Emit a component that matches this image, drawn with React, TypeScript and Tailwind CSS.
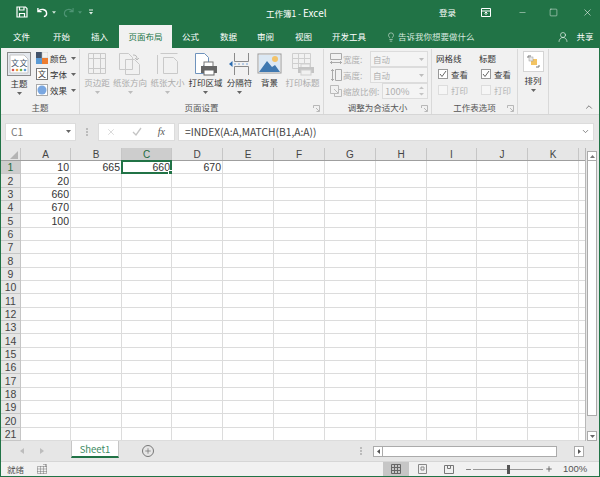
import { ReactNode } from "react";
import { ChevronDown, ChevronUp, Lightbulb, Minus, Plus, Square, UserRound, X } from "lucide-react";

const FONT = "font-['Microsoft_YaHei','Noto_Sans_CJK_SC','Noto_Sans',sans-serif]";
const COLS = ["A", "B", "C", "D", "E", "F", "G", "H", "I", "J", "K"];
const ROWS = Array.from({ length: 21 }, (_, i) => i + 1);
const COL_W = ["w-[50px]", "w-[51px]", "w-[50px]", "w-[51px]", "w-[51px]", "w-[51px]", "w-[51px]", "w-[51px]", "w-[50px]", "w-[51px]", "w-[51px]"];

const CELLS: Record<string, string> = {
  "1-A": "10", "2-A": "20", "3-A": "660", "4-A": "670", "5-A": "100",
  "1-B": "665", "1-C": "660", "1-D": "670",
};

function Caret({ light }: { light?: boolean }) {
  return (
    <svg width="5" height="3" viewBox="0 0 5 3" className="shrink-0">
      <path d="M0 0h5L2.500 3z" fill={light ? "#bdbdbd" : "#666"} />
    </svg>
  );
}

function Launcher() {
  return (
    <svg width="7" height="7" viewBox="0 0 7 7" className="shrink-0">
      <path d="M.5 3V.5H6.5V6.5H3.5M3 3l3 3" fill="none" stroke="#aaa" strokeWidth="0.8" />
    </svg>
  );
}

function Margins() {
  return (
    <svg width="24" height="24" viewBox="0 0 24 24" fill="none" stroke="#c9c9c9">
      <path d="M3.500 1.500h17v20h-17zM8.500 1.500v20M15.500 1.500v20M3.500 6.500h17M3.500 16.500h17" />
    </svg>
  );
}
function Orientation() {
  return (
    <svg width="24" height="24" viewBox="0 0 24 24" fill="none" stroke="#c9c9c9">
      <path d="M1.500 1.500h9l4 4v12h-13zM7.500 7.500h9l5 5v10h-14z" fill="#f1f1f1" />
      <path d="M15 3c3 0 4 1 4 4M17 6l2 2 2-2" stroke="#bbb" />
    </svg>
  );
}
function PaperSize() {
  return (
    <svg width="24" height="24" viewBox="0 0 24 24" fill="none" stroke="#c9c9c9">
      <path d="M1.500 3v19M4.500 1.500h17M7.500 5.500h10l4 4v12h-14z" />
    </svg>
  );
}
function PrintArea() {
  return (
    <svg width="24" height="24" viewBox="0 0 24 24" fill="none">
      <path d="M1.500 1.500h9l4 4v8h-5v8h-8z" fill="#fff" stroke="#6f93bd" />
      <rect x="10" y="10" width="9" height="5" fill="#fff" stroke="#777" />
      <rect x="7" y="14" width="16" height="7" fill="#666" />
      <rect x="10" y="18" width="10" height="5" fill="#fff" stroke="#666" />
    </svg>
  );
}
function Breaks() {
  return (
    <svg width="24" height="24" viewBox="0 0 24 24" fill="none">
      <path d="M6.500 1v8.500h14V1M6.500 23v-8.500h14V23" stroke="#8a8a8a" />
      <path d="M1 12l3.500-3v6z" fill="#2b6cb0" />
      <path d="M6 12h16" stroke="#7da7d8" strokeDasharray="2 2" />
    </svg>
  );
}
function Background() {
  return (
    <svg width="25" height="24" viewBox="0 0 25 24">
      <rect x="1" y="2" width="23" height="19" fill="#fff" stroke="#999" />
      <rect x="2" y="3" width="21" height="17" fill="#dbe8f4" />
      <circle cx="18" cy="7" r="3" fill="#f2c36b" />
      <path d="M2 20l8-11 5 6 3-2 5 7z" fill="#3f78b0" />
    </svg>
  );
}
function PrintTitles() {
  return (
    <svg width="24" height="24" viewBox="0 0 24 24" fill="none" stroke="#cfcfcf">
      <path d="M1.500 1.500h18v15h-18zM1.500 6.500h18M1.500 11.500h18M7.500 1.500v15M13.500 1.500v15" />
      <rect x="10" y="12" width="9" height="4" fill="#f1f1f1" />
      <rect x="7" y="15" width="16" height="6" fill="#c4c4c4" stroke="none" />
      <rect x="10" y="18" width="10" height="5" fill="#f1f1f1" />
    </svg>
  );
}

function PageButton({ w, label, icon, off, caret = true }: { w: string; label: string; icon: ReactNode; off?: boolean; caret?: boolean }) {
  return (
    <div className={`flex flex-col items-center ${w}`}>
      <div className="h-[24px] flex items-center justify-center">{icon}</div>
      <div className={`h-[12px] leading-[12px] text-[8.5px] whitespace-nowrap ${off ? "text-[#ababab]" : "text-[#333]"}`}>{label}</div>
      {caret && <div className="mt-[3px]"><Caret light={off} /></div>}
    </div>
  );
}

function ThemeRow({ icon, label }: { icon: ReactNode; label: string }) {
  return (
    <div className="h-[16px] flex items-center">
      <div className="w-[12px] h-[12px] mr-[2px] flex items-center justify-center">{icon}</div>
      <span className="text-[8.5px] text-[#333] w-[21px] whitespace-nowrap">{label}</span>
      <Caret />
    </div>
  );
}

function Check({ on, label }: { on?: boolean; label: string }) {
  return (
    <div className="h-[16px] flex items-center">
      <div className={`w-[10px] h-[10px] border flex items-center justify-center ${on ? "border-[#999] bg-white" : "border-[#ddd] bg-[#f6f6f6]"}`}>
        {on && (
          <svg width="8" height="8" viewBox="0 0 8 8">
            <path d="M1 4l2 2.500L7 1" fill="none" stroke="#666" />
          </svg>
        )}
      </div>
      <span className={`ml-[3px] text-[8.5px] ${on ? "text-[#444]" : "text-[#b5b5b5]"}`}>{label}</span>
    </div>
  );
}

function SizeRow({ icon, label, value, spin }: { icon: ReactNode; label: string; value: string; spin?: boolean }) {
  return (
    <div className="h-[16px] flex items-center text-[8.5px] text-[#b0b0b0]">
      <div className="w-[13px] flex justify-center mr-[1px]">{icon}</div>
      <span className={`whitespace-nowrap ${spin ? "w-[39px]" : "w-[27px]"}`}>{label}</span>
      <div className="flex-1 h-[16px] border border-[#dcdcdc] bg-[#f4f4f4] flex items-center justify-between pl-[2px] pr-[3px]">
        <span className={spin ? "text-[9.5px]" : ""}>{value}</span>
        {spin ? (
          <svg width="5" height="10" viewBox="0 0 5 10"><path d="M0 3l2.500-2.500L5 3zM0 7l2.500 2.500L5 7z" fill="#c4c4c4" /></svg>
        ) : (
          <Caret light />
        )}
      </div>
    </div>
  );
}

function Group({ w, label, launcher, children }: { w: string; label?: string; launcher?: boolean; children: ReactNode }) {
  return (
    <div className={`${w} h-[65px] border-r border-[#d9d9d9] flex flex-col shrink-0`}>
      <div className="h-[51px]">{children}</div>
      <div className="relative flex-1 flex items-center justify-center text-[8.5px] text-[#555]">
        {label}
        {launcher && <div className="absolute right-[3px] bottom-[2px]"><Launcher /></div>}
      </div>
    </div>
  );
}

function Grid() {
  return (
    <div className="h-[293px] shrink-0 flex font-['Liberation_Sans',sans-serif]">
      <div className="flex-1 min-w-0 flex flex-col overflow-hidden">
        {/* column headers */}
        <div className="h-[13px] flex shrink-0 bg-[#e6e6e6] border-b border-[#9f9f9f]">
          <div className="w-[20px] shrink-0 border-r border-[#c6c6c6] flex items-end justify-end pr-[2px] pb-[1px]">
            <svg width="8" height="8" viewBox="0 0 8 8"><path d="M8 0v8H0z" fill="#b4b4b4" /></svg>
          </div>
          {COLS.map((c, i) => (
            <div key={c} className={`${COL_W[i]} shrink-0 border-r border-[#c6c6c6] flex items-center justify-center text-[10px] leading-[11px] ${c === "C" ? "bg-[#cdcdcd] text-[#1e6b40]" : "text-[#444]"}`}>
              {c}
            </div>
          ))}
        </div>
        {/* rows */}
        <div className="grid grid-rows-[repeat(21,13.33px)] bg-white">
          {ROWS.map((r) => (
            <div key={r} className="flex min-h-0">
              <div className={`w-[20px] shrink-0 border-r border-b border-[#c6c6c6] flex items-end justify-center text-[10.5px] leading-[11px] ${r === 1 ? "bg-[#cdcdcd] text-[#1e6b40]" : "bg-[#e6e6e6] text-[#444]"}`}>
                {r}
              </div>
              {COLS.map((c, i) => {
                const sel = r === 1 && c === "C";
                return (
                  <div key={c} className={`${COL_W[i]} shrink-0 relative border-r border-b border-[#dcdcdc] flex items-end justify-end pr-[1px] text-[10.5px] leading-[11px] text-[#333]`}>
                    {CELLS[`${r}-${c}`]}
                    {sel && (
                      <div className="absolute left-[-1px] top-[-1px] right-[-1px] bottom-[-1px] border-2 border-[#217346]">
                        <div className="absolute right-[-3px] bottom-[-3px] w-[5px] h-[5px] bg-[#217346] border border-white" />
                      </div>
                    )}
                  </div>
                );
              })}
              <div className="flex-1 border-b border-[#dcdcdc]" />
            </div>
          ))}
        </div>
      </div>
      {/* vertical scrollbar */}
      <div className="w-[14px] shrink-0 bg-[#e6e6e6] flex flex-col pt-[3px] pl-[1px] border-l border-[#b8b8b8]">
        <div className="w-[10px] h-[10px] bg-white border border-[#ababab] flex items-center justify-center">
          <svg width="5" height="3" viewBox="0 0 5 3"><path d="M0 3h5L2.500 0z" fill="#777" /></svg>
        </div>
        <div className="w-[10px] h-[255px] bg-white border border-[#ababab] border-t-0" />
        <div className="flex-1" />
        <div className="w-[10px] h-[10px] bg-white border border-[#ababab] flex items-center justify-center">
          <Caret />
        </div>
      </div>
    </div>
  );
}

export default function App() {
  return (
    <div className={`w-[600px] h-[477px] flex flex-col overflow-hidden bg-[#e6e6e6] border-x border-b border-[#217346] ${FONT}`}>
      {/* title bar */}
      <div className="h-[24px] shrink-0 bg-[#217346] flex items-center text-white text-[8.5px]">
        <svg width="12" height="12" viewBox="0 0 12 12" fill="none" stroke="#fff" className="ml-[15px]">
          <path d="M1 1h8.500l1.500 1.500V11H1zM3.500 1v3h4.500V1M3.500 11V7.500h5V11" strokeWidth="1.200" />
        </svg>
        <svg width="11" height="11" viewBox="0 0 12 12" fill="none" stroke="#fff" className="ml-[9px]" strokeWidth="1.500">
          <path d="M1 1v4h4M1.500 4.500C4 1.500 10 2 10.500 6.500c.2 2-1 3.500-3 4" />
        </svg>
        <div className="ml-[4px]"><svg width="4" height="3" viewBox="0 0 5 3"><path d="M0 0h5L2.500 3z" fill="#cfe3d8" /></svg></div>
        <svg width="11" height="11" viewBox="0 0 12 12" fill="none" stroke="#4e9474" className="ml-[7px]" strokeWidth="1.200">
          <path d="M11 1v4H7M10.500 4.500C8 1.500 2 2 1.500 6.500c-.2 2 1 3.500 3 4" />
        </svg>
        <div className="ml-[4px]"><svg width="4" height="3" viewBox="0 0 5 3"><path d="M0 0h5L2.500 3z" fill="#4e9474" /></svg></div>
        <svg width="4" height="6" viewBox="0 0 5 6" className="ml-[7px]"><path d="M0 0h5v1H0zM0 3h5L2.500 6z" fill="#dfeee6" /></svg>
        <div className="ml-[173px] w-[66px] whitespace-nowrap">工作簿1 - <span className="text-[10px]">Excel</span></div>
        <span className="ml-[107px] w-[17px] whitespace-nowrap">登录</span>
        <svg width="10" height="9" viewBox="0 0 10 9" fill="none" stroke="#fff" className="ml-[25px]">
          <path d="M.5.500h9v8h-9zM.5 3h9M5 5v2M3.500 5.500L5 4l1.500 1.500" />
        </svg>
        <Minus size={9} strokeWidth={1.2} className="ml-[27px]" />
        <Square size={9} strokeWidth={1.2} className="ml-[22px]" />
        <X size={11} strokeWidth={1.2} className="ml-[24px]" />
      </div>

      {/* tabs */}
      <div className="h-[24px] shrink-0 bg-[#217346] flex items-end text-white text-[8.5px]">
        {[
          ["文件", "w-[52px] pl-[12px]"],
          ["开始", "w-[38px]"],
          ["插入", "w-[28px]"],
        ].map(([t, w]) => (
          <div key={t} className={`h-[23px] flex items-center ${w}`}>{t}</div>
        ))}
        <div className="w-[53px] h-[23px] bg-[#f1f1f1] text-[#217346] flex items-center justify-center whitespace-nowrap">页面布局</div>
        {[
          ["公式", "w-[38px] ml-[10px]"],
          ["数据", "w-[37px]"],
          ["审阅", "w-[38px]"],
          ["视图", "w-[37px]"],
          ["开发工具", "w-[54px]"],
        ].map(([t, w]) => (
          <div key={t} className={`h-[23px] flex items-center whitespace-nowrap ${w}`}>{t}</div>
        ))}
        <div className="h-[23px] flex items-center">
          <Lightbulb size={10} strokeWidth={1.2} />
          <span className="ml-[2px] whitespace-nowrap text-[#d7e8df]">告诉我你想要做什么</span>
        </div>
        <div className="h-[23px] ml-[82px] flex items-center">
          <UserRound size={12} strokeWidth={1.2} />
          <span className="ml-[8px] whitespace-nowrap">共享</span>
        </div>
      </div>

      {/* ribbon */}
      <div className="h-[67px] shrink-0 bg-[#f1f1f1] border-b border-[#d6d6d6] flex pt-[1px] relative">
        <Group w="w-[79px]" label="主题">
          <div className="flex pl-[6px] pt-[1px]">
            <div className="w-[24px] mt-[2px] flex flex-col items-center">
              <div className="w-[24px] h-[24px] border border-[#8a8a8a] bg-[#e4e8ee] flex items-center justify-center">
                <svg width="20" height="20" viewBox="0 0 20 20">
                  <path d="M1 1h14l4 4v14H1z" fill="#fff" stroke="#c5c5c5" />
                  <text x="2" y="12" fontSize="8" fill="#44546a">文</text>
                  <text x="10.500" y="12" fontSize="8" fill="#44546a">文</text>
                  <circle cx="4" cy="16" r="1.300" fill="#d9534f" />
                  <circle cx="8" cy="16" r="1.300" fill="#e8a33d" />
                  <circle cx="12" cy="16" r="1.300" fill="#70ad47" />
                  <circle cx="16" cy="16" r="1.300" fill="#5b9bd5" />
                </svg>
              </div>
              <div className="h-[12px] leading-[12px] text-[8.5px] text-[#333] mt-[1px]">主题</div>
              <div className="mt-[3px]"><Caret /></div>
            </div>
            <div className="ml-[5px] flex flex-col">
              <ThemeRow
                label="颜色"
                icon={<svg width="12" height="12" viewBox="0 0 12 12"><rect width="6" height="6" fill="#44546a" /><rect x="6" width="6" height="6" fill="#f1f1f1" stroke="#bbb" strokeWidth="0.5" /><rect y="6" width="6" height="6" fill="#5b9bd5" /><rect x="6" y="6" width="6" height="6" fill="#ed7d31" /></svg>}
              />
              <ThemeRow
                label="字体"
                icon={<div className="w-[12px] h-[12px] border border-[#777] bg-white text-[8px] leading-[10px] text-center text-[#333]">文</div>}
              />
              <ThemeRow
                label="效果"
                icon={<svg width="12" height="12" viewBox="0 0 12 12"><rect x=".5" y=".5" width="11" height="11" fill="#fff" stroke="#aaa" /><circle cx="6" cy="6" r="4.500" fill="#7aa7e0" /></svg>}
              />
            </div>
          </div>
        </Group>

        <Group w="w-[244px]" label="页面设置" launcher>
          <div className="flex pl-[4px] pt-[3px]">
            <PageButton w="w-[26px]" label="页边距" icon={<Margins />} off />
            <PageButton w="w-[34px] ml-[3px]" label="纸张方向" icon={<Orientation />} off />
            <PageButton w="w-[35px] ml-[3px]" label="纸张大小" icon={<PaperSize />} off />
            <PageButton w="w-[35px] ml-[3px]" label="打印区域" icon={<PrintArea />} />
            <PageButton w="w-[27px] ml-[3px]" label="分隔符" icon={<Breaks />} />
            <PageButton w="w-[27px] ml-[3px]" label="背景" icon={<Background />} caret={false} />
            <PageButton w="w-[35px] ml-[2px]" label="打印标题" icon={<PrintTitles />} off caret={false} />
          </div>
        </Group>

        <Group w="w-[108px]" label="调整为合适大小" launcher>
          <div className="flex flex-col pl-[5px] pr-[3px] pt-[2px]">
            <SizeRow
              label="宽度:"
              value="自动"
              icon={<svg width="12" height="12" viewBox="0 0 12 12" fill="none" stroke="#aaa"><path d="M.5.500h11v6h-11zM0 9.500h12M1.500 8v3M10.500 8v3" /></svg>}
            />
            <SizeRow
              label="高度:"
              value="自动"
              icon={<svg width="12" height="12" viewBox="0 0 12 12" fill="none" stroke="#aaa"><path d="M5.500.500h6v11h-6zM2.500 0v12M1 1.500h3M1 10.500h3" /></svg>}
            />
            <SizeRow
              spin
              label="缩放比例:"
              value="100%"
              icon={<svg width="12" height="12" viewBox="0 0 12 12" fill="none" stroke="#bbb"><path d="M.5.500h8v8h-8zM4.500 8.500v3h7v-7h-3M4 4l4 4" /></svg>}
            />
          </div>
        </Group>

        <Group w="w-[86px]" label="工作表选项" launcher>
          <div className="flex pl-[4px] pt-[1px] text-[8.5px] text-[#333]">
            <div className="w-[43px] flex flex-col">
              <div className="h-[16px] leading-[16px]">网格线</div>
              <div className="pl-[2px]"><Check on label="查看" /></div>
              <div className="pl-[2px]"><Check label="打印" /></div>
            </div>
            <div className="flex flex-col">
              <div className="h-[16px] leading-[16px]">标题</div>
              <div className="pl-[2px]"><Check on label="查看" /></div>
              <div className="pl-[2px]"><Check label="打印" /></div>
            </div>
          </div>
        </Group>

        <Group w="w-[31px]">
          <div className="flex flex-col items-center pt-[2px]">
            <div className="w-[21px] h-[21px] border border-[#d4d4d4] bg-white flex items-center justify-center">
              <svg width="13" height="13" viewBox="0 0 13 13">
                <path d="M1 3V1h3M12 10v2H9" fill="none" stroke="#777" />
                <rect x="4" y="4" width="6" height="6" fill="#f3c463" />
                <rect x="2" y="2" width="4" height="4" fill="#e9e9e9" stroke="#999" strokeWidth="0.5" />
              </svg>
            </div>
            <div className="mt-[2px] h-[12px] leading-[12px] text-[8.5px] text-[#333]">排列</div>
            <div className="mt-[3px]"><Caret /></div>
          </div>
        </Group>

        <ChevronUp size={10} strokeWidth={2} color="#666" className="absolute right-[5px] bottom-[2px]" />
      </div>

      {/* formula bar */}
      <div className="h-[33px] shrink-0 flex items-center pl-[4px] pr-[5px] text-[10.25px] text-[#555]">
        <div className="w-[71px] h-[18px] bg-white border border-[#dcdcdc] flex items-center justify-between pl-[5px] pr-[4px] text-[#777]">
          <span>C1</span>
          <Caret />
        </div>
        <div className="w-[22px] flex justify-center">
          <svg width="2" height="8" viewBox="0 0 2 8"><path d="M0 0h2v2H0zM0 3h2v2H0zM0 6h2v2H0z" fill="#bbb" /></svg>
        </div>
        <div className="w-[77px] h-[18px] bg-white border border-[#dcdcdc] flex items-center justify-between pl-[7px] pr-[9px]">
          <X size={10} color="#c4c4c4" strokeWidth={1.5} />
          <svg width="10" height="9" viewBox="0 0 10 9"><path d="M1 5l3 3 5-7" fill="none" stroke="#c4c4c4" strokeWidth="1.300" /></svg>
          <span className="font-['Liberation_Serif',serif] italic text-[10px] text-[#555]">fx</span>
        </div>
        <div className="ml-[3px] flex-1 h-[18px] bg-white border border-[#dcdcdc] flex items-center pl-[6px] text-[#444] justify-between pr-[3px]">
          <span>=INDEX(A:A,MATCH(B1,A:A))</span>
          <ChevronDown size={9} strokeWidth={2} color="#666" />
        </div>
      </div>

      <Grid />

      {/* sheet tabs */}
      <div className="h-[20px] shrink-0 flex text-[#666]">
        <div className="w-[70px] flex items-center pl-[19px] gap-[16px]">
          <svg width="4" height="6" viewBox="0 0 4 6"><path d="M4 0v6L0 3z" fill="#bdbdbd" /></svg>
          <svg width="4" height="6" viewBox="0 0 4 6"><path d="M0 0v6l4-3z" fill="#bdbdbd" /></svg>
        </div>
        <div className="w-[48px] h-[17px] bg-white border-x border-b-2 border-[#c6c6c6] border-b-[#217346] flex items-center justify-center pt-[2px] text-[9.5px] text-[#3e8a63]">
          Sheet1
        </div>
        <div className="ml-[23px] flex items-center h-[20px]">
          <div className="w-[12px] h-[12px] rounded-full border border-[#777] flex items-center justify-center">
            <Plus size={8} strokeWidth={2} color="#666" />
          </div>
        </div>
        <div className="ml-[206px] flex items-center h-[20px]">
          <svg width="2" height="8" viewBox="0 0 2 8"><path d="M0 0h2v2H0zM0 3h2v2H0zM0 6h2v2H0z" fill="#bbb" /></svg>
        </div>
        <div className="ml-[11px] flex items-center h-[20px] w-[211px]">
          <div className="w-[10px] h-[11px] bg-white border border-[#ababab] flex items-center justify-center">
            <svg width="3" height="5" viewBox="0 0 3 5"><path d="M3 0v5L0 2.500z" fill="#555" /></svg>
          </div>
          <div className="w-[174px] h-[11px] bg-white border border-[#ababab] border-l-0" />
          <div className="flex-1" />
          <div className="w-[10px] h-[11px] bg-white border border-[#ababab] flex items-center justify-center">
            <svg width="3" height="5" viewBox="0 0 3 5"><path d="M0 0v5l3-2.500z" fill="#555" /></svg>
          </div>
        </div>
      </div>

      {/* status bar */}
      <div className="h-[15px] shrink-0 bg-[#f1f1f1] border-t border-[#d6d6d6] flex items-center text-[8.5px] text-[#555]">
        <span className="ml-[6px] w-[17px] whitespace-nowrap">就绪</span>
        <svg width="10" height="10" viewBox="0 0 10 10" className="ml-[13px]" fill="none" stroke="#777">
          <path d="M.5 2.500h9v7h-9zM.5 5h9M.5 7.500h9M3.500 2.500v7M6.500 2.500v7" strokeDasharray="1 1" />
          <path d="M6 0h3v3" />
        </svg>
        <div className="ml-[336px] w-[26px] h-[14px] bg-[#c6c6c6] flex items-center justify-center">
          <svg width="10" height="10" viewBox="0 0 10 10" fill="none" stroke="#666"><path d="M.5.500h9v9h-9zM.5 3.500h9M.5 6.500h9M3.500.500v9M6.500.500v9" /></svg>
        </div>
        <svg width="9" height="10" viewBox="0 0 9 10" fill="none" stroke="#888" className="ml-[9px]"><path d="M.5.500h8v9h-8zM3 3h3v3H3z" /></svg>
        <svg width="10" height="9" viewBox="0 0 10 9" fill="none" stroke="#777" className="ml-[17px]"><path d="M.5.500h9v8h-9zM3.500.500v3h3v-3" /></svg>
        <Minus size={7} strokeWidth={2.5} className="ml-[11px]" color="#555" />
        <div className="relative ml-[1px] w-[70px] h-px bg-[#999]">
          <div className="absolute left-[34px] top-[-4px] w-[3px] h-[9px] bg-[#555]" />
        </div>
        <Plus size={8} strokeWidth={2.5} className="ml-[2px]" color="#555" />
        <span className="ml-[10px] text-[9.5px] font-['Liberation_Sans',sans-serif]">100%</span>
      </div>
    </div>
  );
}
